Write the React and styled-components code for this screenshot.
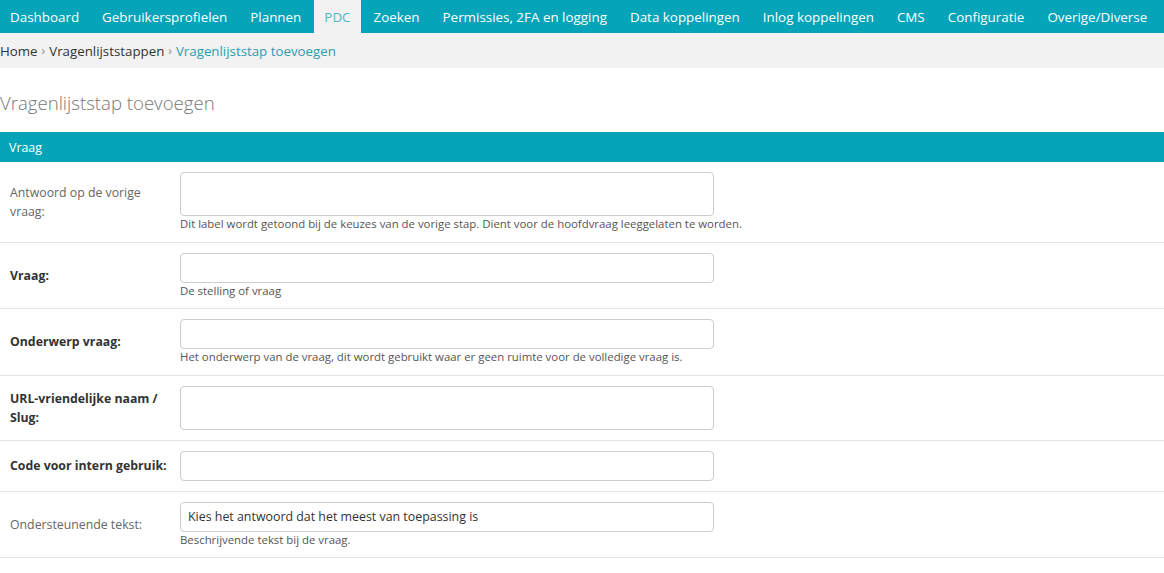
import styled, { createGlobalStyle } from "styled-components"

const GlobalStyle = createGlobalStyle`
  html, body {
    margin: 0;
    padding: 0;
    background: #fff;
    font-family: "Open Sans", "Noto Sans", sans-serif;
    color: #333;
  }
  * { box-sizing: border-box; }
`

const navItems = [
  "Dashboard",
  "Gebruikersprofielen",
  "Plannen",
  "PDC",
  "Zoeken",
  "Permissies, 2FA en logging",
  "Data koppelingen",
  "Inlog koppelingen",
  "CMS",
  "Configuratie",
  "Overige/Diverse",
]

const fields = [
  { label: "Antwoord op de vorige vraag:", tall: true, help: "Dit label wordt getoond bij de keuzes van de vorige stap. Dient voor de hoofdvraag leeggelaten te worden." },
  { label: "Vraag:", required: true, help: "De stelling of vraag" },
  { label: "Onderwerp vraag:", required: true, help: "Het onderwerp van de vraag, dit wordt gebruikt waar er geen ruimte voor de volledige vraag is." },
  { label: "URL-vriendelijke naam / Slug:", required: true, tall: true },
  { label: "Code voor intern gebruik:", required: true },
  { label: "Ondersteunende tekst:", value: "Kies het antwoord dat het meest van toepassing is", help: "Beschrijvende tekst bij de vraag." },
]

export default function App() {
  return (
    <>
      <GlobalStyle />
      <Nav>
        {navItems.map(item => (
          <NavItem key={item} $active={item === "PDC"}>{item}</NavItem>
        ))}
      </Nav>
      <Breadcrumbs>
        <Crumb>Home</Crumb>
        <Sep>›</Sep>
        <Crumb>Vragenlijststappen</Crumb>
        <Sep>›</Sep>
        <Crumb $current>Vragenlijststap toevoegen</Crumb>
      </Breadcrumbs>
      <Title>Vragenlijststap toevoegen</Title>
      <Fieldset>
        <Legend>Vraag</Legend>
        {fields.map(f => (
          <Row key={f.label}>
            <Label $required={f.required}>{f.label}</Label>
            <Control>
              {f.tall
                ? <TextArea rows={2} />
                : <Input defaultValue={f.value || ""} />}
              {f.help && <Help>{f.help}</Help>}
            </Control>
          </Row>
        ))}
      </Fieldset>
    </>
  )
}

const Nav = styled.nav`
  display: flex;
  height: 33px;
  background: #05a4b9;
`

const NavItem = styled.a`
  display: flex;
  align-items: center;
  padding: 0 10px;
  margin-right: 3px;
  font-size: 13.4px;
  color: ${p => (p.$active ? "#4bb8c7" : "#fff")};
  background: ${p => (p.$active ? "#f2f2f2" : "transparent")};
  white-space: nowrap;
  cursor: pointer;
`

const Breadcrumbs = styled.div`
  display: flex;
  align-items: center;
  height: 35px;
  background: #f2f2f2;
  font-size: 13.3px;
`

const Crumb = styled.span`
  color: ${p => (p.$current ? "#2a9db0" : "#333")};
`

const Sep = styled.span`
  color: #888;
  margin: 0 4px;
  font-size: 12px;
`

const Title = styled.h1`
  margin: 0;
  padding: 22px 0 17px;
  font-size: 18.6px;
  font-weight: 300;
  color: #777;
`

const Fieldset = styled.section``

const Legend = styled.h2`
  margin: 0;
  height: 30px;
  display: flex;
  align-items: center;
  padding: 0 9px;
  background: #05a4b9;
  color: #fff;
  font-size: 12.4px;
  font-weight: 400;
`

const Row = styled.div`
  display: grid;
  grid-template-columns: 180px 534px;
  align-items: start;
  padding: 10px 0;
  border-bottom: 1px solid #e5e5e5;
`

const Label = styled.label`
  align-self: center;
  padding: 0 4px 0 10px;
  font-size: 12.3px;
  line-height: 19px;
  color: ${p => (p.$required ? "#333" : "#666")};
  font-weight: ${p => (p.$required ? 700 : 400)};
`

const Control = styled.div`
  display: flex;
  flex-direction: column;
`

const fieldBase = `
  width: 534px;
  border: 1px solid #ccc;
  border-radius: 4px;
  font-family: "Open Sans", "Noto Sans", sans-serif;
  font-size: 12.4px;
  color: #333;
  padding: 5px 7px;
  outline: none;
  background: #fff;
`

const Input = styled.input`
  ${fieldBase}
  height: 30px;
`

const TextArea = styled.textarea`
  ${fieldBase}
  height: 44px;
  resize: none;
  display: block;
`

const Help = styled.div`
  margin-top: 1px;
  font-size: 11.4px;
  line-height: 14.6px;
  color: #555;
  white-space: nowrap;
`
